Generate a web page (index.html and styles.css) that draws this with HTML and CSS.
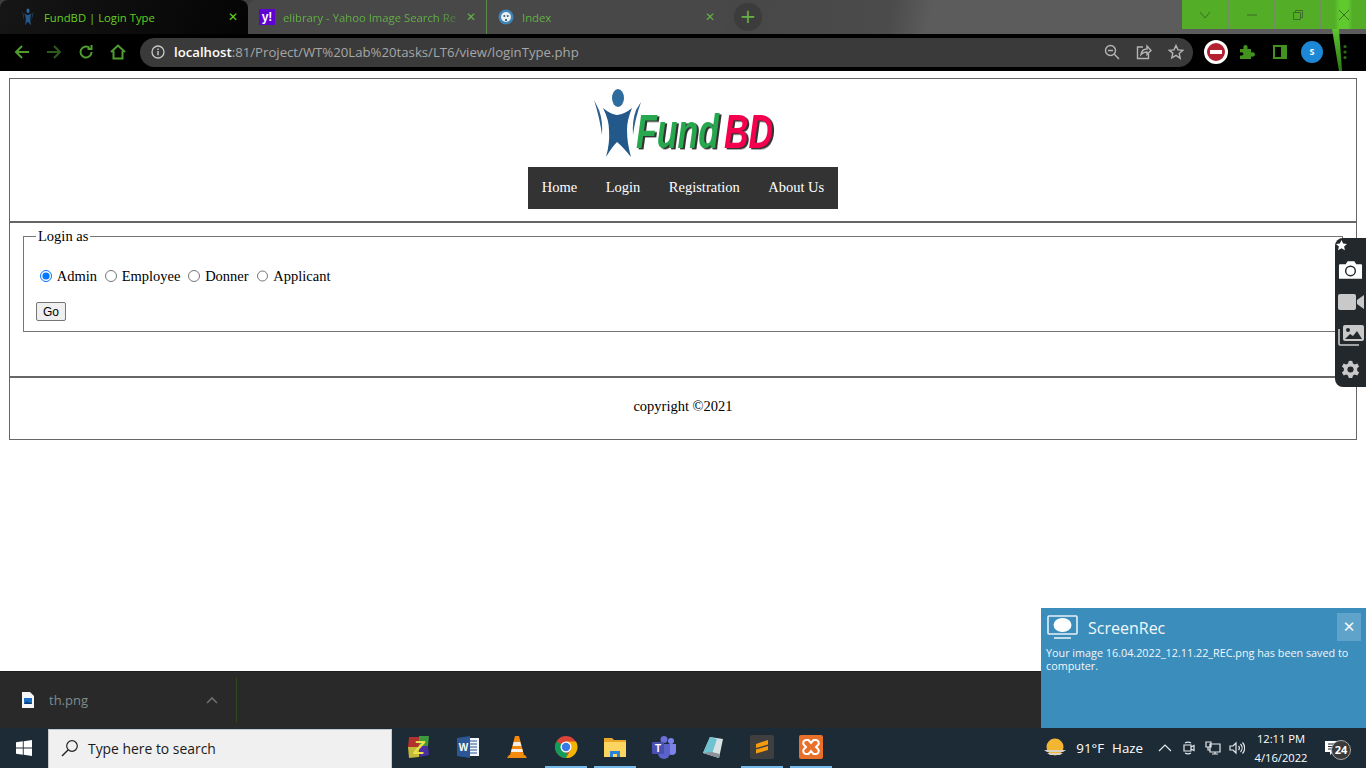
FILE: index.html
```html
<!DOCTYPE html>
<html lang="en">
<head>
    <meta charset="UTF-8">
    <title>FundBD | Login Type</title>
    <link rel="stylesheet" href="styles.css">
</head>
<body>
    <svg class="defs" width="0" height="0">
        <symbol id="figure" viewBox="0 0 50 72">
            <ellipse cx="25" cy="11" rx="6" ry="9" fill="#2f6c9e"/>
            <path d="M10 21 Q17 27 24 28 Q32 27 39 21 Q34 33 34 43 Q34 56 38 70 Q30 60 24 55 Q19 60 13 70 Q17 56 16 43 Q16 33 10 21Z" fill="#23598a"/>
            <path d="M1 13 Q7 32 9 48 Q10 34 6 23Z" fill="#2a5f8e"/>
            <path d="M48 15 Q42 32 40 48 Q39 34 43 23Z" fill="#2a5f8e"/>
        </symbol>
    </svg>

    <header class="browser">
        <div class="tabstrip">
            <div class="tab tab-active">
                <svg class="favicon" width="16" height="18"><use href="#figure"/></svg>
                <span class="tab-title">FundBD | Login Type</span>
                <span class="tab-close">✕</span>
            </div>
            <div class="tab tab-yahoo">
                <span class="favicon-yahoo">y!</span>
                <span class="tab-title tab-fade">elibrary - Yahoo Image Search Re</span>
                <span class="tab-close">✕</span>
            </div>
            <div class="tab tab-index">
                <svg class="favicon" width="16" height="16" viewBox="0 0 16 16">
                    <circle cx="8" cy="8" r="7.5" fill="#3f86b8"/>
                    <circle cx="8" cy="8" r="5" fill="#e9eef2"/>
                    <path d="M5.5 6h1.6v2H5.5zM8.9 6h1.6v2H8.9zM7 10h2v2H7z" fill="#47627a"/>
                </svg>
                <span class="tab-title">Index</span>
                <span class="tab-close">✕</span>
            </div>
            <div class="new-tab">+</div>
            <div class="window-btns">
                <div class="win-btn">
                    <svg width="12" height="12" viewBox="0 0 12 12"><path d="M1 3l5 6 5-6" class="win-line"/></svg>
                </div>
                <div class="win-btn">
                    <svg width="12" height="12" viewBox="0 0 12 12"><path d="M1 6h10" class="win-line"/></svg>
                </div>
                <div class="win-btn">
                    <svg width="12" height="12" viewBox="0 0 12 12"><path d="M1.5 3.5h7v7h-7zM3.5 3.5v-2h7v7h-2" class="win-line"/></svg>
                </div>
                <div class="win-btn win-close">
                    <svg width="12" height="12" viewBox="0 0 12 12"><path d="M1 1l10 10M11 1L1 11" class="win-line"/></svg>
                </div>
            </div>
        </div>
        <div class="toolbar">
            <div class="nav-icons">
                <svg width="16" height="16" viewBox="0 0 16 16"><path d="M15 8H2M8 2L2 8l6 6" class="ico-green"/></svg>
                <svg width="16" height="16" viewBox="0 0 16 16"><path d="M1 8h13M8 2l6 6-6 6" class="ico-dim"/></svg>
                <svg width="16" height="16" viewBox="0 0 16 16"><path d="M13.5 8A5.5 5.5 0 1 1 11.5 3.8M13.5 1v4h-4" class="ico-green"/></svg>
                <svg width="16" height="16" viewBox="0 0 16 16"><path d="M1 8l7-6.5L15 8M3.5 7v7.5h9V7" class="ico-green"/></svg>
            </div>
            <div class="omnibox">
                <svg class="info" width="14" height="14" viewBox="0 0 14 14">
                    <circle cx="7" cy="7" r="6" fill="none" stroke="#c8c8c8" stroke-width="1.3"/>
                    <path d="M7 6v4.2M7 3.6v1.4" stroke="#c8c8c8" stroke-width="1.4"/>
                </svg>
                <span class="url"><b>localhost</b>:81/Project/WT%20Lab%20tasks/LT6/view/loginType.php</span>
                <div class="omni-icons">
                    <svg width="16" height="16" viewBox="0 0 16 16"><circle cx="6.5" cy="6.5" r="5" class="ico-grey"/><path d="M4 6.5h5M10.3 10.3L15 15" class="ico-grey"/></svg>
                    <svg width="16" height="16" viewBox="0 0 16 16"><path d="M7 3H1.5v11.5h11V10M5 10.5C5.5 7 8 5 11 5V2l4 4.5-4 4V8C8.5 8 6.5 8.8 5 10.5Z" class="ico-grey"/></svg>
                    <svg width="16" height="16" viewBox="0 0 16 16"><path d="M8 1.5l2 4.4 4.7.5-3.5 3.2 1 4.7L8 11.4l-4.2 2.4 1-4.7L1.300 6.400 6 5.900z" class="ico-grey"/></svg>
                </div>
            </div>
            <div class="ext-icons">
                <span class="ext-stop"><i></i></span>
                <svg width="16" height="16" viewBox="0 0 16 16"><path d="M1 5h3.500C4 2.500 5 1 6.500 1S9 2.500 8.500 5H12v3.500C14.500 8 16 9 16 10.500S14.500 13 12 12.500V15H1v-3.500C3 12 4.500 11 4.500 10S3 8 1 8.500z" fill="#43911f"/></svg>
                <span class="ext-panel"></span>
                <span class="avatar">S</span>
                <svg width="4" height="16" viewBox="0 0 4 16"><circle cx="2" cy="2.500" r="1.600" fill="#2f6d1c"/><circle cx="2" cy="8" r="1.600" fill="#2f6d1c"/><circle cx="2" cy="13.500" r="1.600" fill="#2f6d1c"/></svg>
            </div>
        </div>
        <div class="glow"></div>
    </header>

    <main class="page">
        <div class="frame">
            <section class="site-head">
                <svg class="logo" width="182" height="73" viewBox="0 0 182 73">
                    <use href="#figure" width="50" height="72"/>
                    <g transform="scale(1 1.4)">
                        <text x="43" y="43.500" class="logo-fund">Fund</text>
                        <text x="131" y="43.500" class="logo-bd">BD</text>
                    </g>
                </svg>
                <nav class="site-nav">
                    <a>Home</a>
                    <a>Login</a>
                    <a>Registration</a>
                    <a>About Us</a>
                </nav>
            </section>
            <section class="site-main">
                <fieldset class="login-box">
                    <legend>Login as</legend>
                    <div class="radios">
                        <label><input type="radio" name="type" checked> Admin</label>
                        <label><input type="radio" name="type"> Employee</label>
                        <label><input type="radio" name="type"> Donner</label>
                        <label><input type="radio" name="type"> Applicant</label>
                    </div>
                    <button class="go">Go</button>
                </fieldset>
            </section>
            <footer class="site-foot">copyright ©2021</footer>
        </div>
    </main>

    <div class="downloads">
        <div class="dl-item">
            <svg width="12" height="16" viewBox="0 0 12 16">
                <path d="M0 0h8l4 4v12H0z" fill="#f4f6f8"/>
                <rect x="2" y="6" width="8" height="6" fill="#1c6fc4"/>
                <path d="M2 12l3-3 2 2 1-1 2 2z" fill="#0d3d75"/>
            </svg>
            <span class="dl-name">th.png</span>
            <svg class="dl-arrow" width="12" height="8" viewBox="0 0 12 8"><path d="M1 7l5-5 5 5" fill="none" stroke="#6e6e6e" stroke-width="1.600"/></svg>
        </div>
    </div>

    <div class="taskbar">
        <div class="start">
            <svg width="16" height="16" viewBox="0 0 16 16"><path d="M0 2.300l6.800-1v6.300H0zM7.700 1.200L16 0v7.600H7.700zM0 8.500h6.800v6.300l-6.800-1zM7.700 8.500H16V16l-8.300-1.200z" fill="#fff"/></svg>
        </div>
        <div class="search">
            <svg width="18" height="18" viewBox="0 0 18 18"><circle cx="11" cy="7" r="5.300" fill="none" stroke="#222" stroke-width="1.200"/><path d="M7 11l-6 6" stroke="#222" stroke-width="1.400"/></svg>
            <span>Type here to search</span>
        </div>
        <div class="apps">
            <div class="app">
                <svg width="24" height="24" viewBox="0 0 24 24">
                    <path d="M2 2h10v10H1z" fill="#b3312d"/><path d="M12 1h10l-1 10h-9z" fill="#3f9a3d"/>
                    <path d="M1 12h11v10L2 23z" fill="#c5b93a"/><path d="M12 11h9l1 9-10 2z" fill="#4b2f9c"/>
                    <text x="12" y="19" class="ico-z">Z</text>
                </svg>
            </div>
            <div class="app">
                <svg width="24" height="24" viewBox="0 0 24 24">
                    <rect x="8" y="3" width="15" height="18" fill="#f2f5f9"/>
                    <path d="M14 6h7M14 9h7M14 12h7M14 15h7M14 18h7" stroke="#2b5797" stroke-width="1"/>
                    <path d="M1 3l13-2v22L1 21z" fill="#2b5797"/>
                    <text x="7.500" y="16" class="ico-w">W</text>
                </svg>
            </div>
            <div class="app">
                <svg width="24" height="24" viewBox="0 0 24 24">
                    <path d="M2 23l2-3h16l2 3z" fill="#f08a0c"/>
                    <path d="M10 1h4l5 19H5z" fill="#f58a0e"/>
                    <path d="M8.700 7h6.600l1 4H7.700zM6.800 14h10.400l.8 3H6z" fill="#f4f1ea"/>
                </svg>
            </div>
            <div class="app">
                <svg width="24" height="24" viewBox="0 0 24 24">
                    <circle cx="12" cy="12" r="11" fill="#db4437"/>
                    <path d="M12 12L2.500 17.500A11 11 0 0 0 12 23h1z" fill="#0f9d58"/>
                    <path d="M2.500 17.500A11 11 0 0 1 2.500 6.500L12 12z" fill="#0f9d58"/>
                    <path d="M12 6.500h10A11 11 0 0 1 12 23l5-9z" fill="#f4b400"/>
                    <circle cx="12" cy="12" r="5.500" fill="#fff"/>
                    <circle cx="12" cy="12" r="4.200" fill="#3b78e7"/>
                </svg>
            </div>
            <div class="app">
                <svg width="24" height="24" viewBox="0 0 24 24">
                    <path d="M1 3h8l2 2h12v5H1z" fill="#e8a92c"/>
                    <rect x="1" y="7" width="22" height="15" fill="#fbd560"/>
                    <path d="M7 22v-6h10v6h-3v-3h-4v3z" fill="#2a83d6"/>
                </svg>
            </div>
            <div class="app">
                <svg width="26" height="24" viewBox="0 0 26 24">
                    <circle cx="20" cy="6" r="3" fill="#7b83eb"/>
                    <circle cx="13" cy="4.500" r="3.500" fill="#6a70d8"/>
                    <path d="M17 9h8v7a4 4 0 0 1-8 0z" fill="#7b83eb"/>
                    <path d="M7 9h12v9a6 6 0 0 1-12 0z" fill="#5b63cb"/>
                    <rect x="1" y="7" width="12" height="12" rx="1" fill="#4a50b0"/>
                    <text x="7" y="16.500" class="ico-t">T</text>
                </svg>
            </div>
            <div class="app">
                <svg width="24" height="24" viewBox="0 0 24 24">
                    <path d="M9 2l13 2-4 19L2 18z" fill="#d9e3e6"/>
                    <path d="M9 2l-7 16 9 1 5-15z" fill="#6fc3d0"/>
                    <path d="M2 18l16 5 .8-4L11 17z" fill="#8c9398"/>
                </svg>
            </div>
            <div class="app">
                <svg width="24" height="24" viewBox="0 0 24 24">
                    <rect width="24" height="24" rx="2" fill="#3f3f3f"/>
                    <path d="M18 5L6 9v4l12 -3.500zM18 11L6 14.500v4L18 15z" fill="#f79a0e"/>
                </svg>
            </div>
            <div class="app">
                <svg width="24" height="24" viewBox="0 0 24 24">
                    <rect width="24" height="24" rx="2" fill="#e9702a"/>
                    <path d="M7 5h2.500l2.500 3 2.500-3H17a3 3 0 0 1 2 5l-2 2 2 2a3 3 0 0 1-2 5h-2.500L12 16l-2.500 3H7a3 3 0 0 1-2-5l2-2-2-2a3 3 0 0 1 2-5z" fill="none" stroke="#fff" stroke-width="2"/>
                </svg>
            </div>
        </div>
        <div class="tray">
            <svg class="weather" width="24" height="20" viewBox="0 0 24 20">
                <circle cx="12" cy="9" r="8.500" fill="#f2b632"/>
                <path d="M1 12h22l-3 2H4zM4 15h16l-3 2H7z" fill="#d8d2c4"/>
            </svg>
            <span class="temp">91°F</span>
            <span class="haze">Haze</span>
            <svg class="tray-chev" width="14" height="8" viewBox="0 0 14 8"><path d="M1 7l6-6 6 6" class="tray-line"/></svg>
            <svg class="tray-meet" width="14" height="16" viewBox="0 0 14 16"><path d="M3 3a6 6 0 0 1 6 0M3 13a6 6 0 0 0 6 0M2 5h7v6H2zM9 7l3-1.500v5L9 9" class="tray-line"/></svg>
            <svg class="tray-net" width="16" height="14" viewBox="0 0 16 14"><path d="M5 3h10v8H5zM1 1h5v5H1zM10 11v2M7 13h6M3 6v3h2" class="tray-line"/></svg>
            <svg class="tray-vol" width="16" height="14" viewBox="0 0 16 14"><path d="M1 5h3l3-3v10L4 9H1zM9.500 5a3 3 0 0 1 0 4M11.500 3a6 6 0 0 1 0 8M13.500 1.500a8 8 0 0 1 0 11" class="tray-line"/></svg>
            <div class="clock"><span>12:11 PM</span><span>4/16/2022</span></div>
            <div class="notif">
                <svg width="16" height="14" viewBox="0 0 16 14"><path d="M0 0h16v11H8l-3 3v-3H0z" fill="#fff"/><path d="M3 3h10M3 5.500h10M3 8h7" stroke="#1d2b36" stroke-width="1"/></svg>
                <span class="badge">24</span>
            </div>
        </div>
    </div>

    <aside class="capture-bar">
        <svg class="cap-pin" width="11" height="11" viewBox="0 0 11 11"><path d="M5.500 0l1.600 3.500 3.900.4-2.900 2.500.8 3.800-3.400-2-3.400 2 .8-3.800L0 3.900l3.900-.4z" fill="#fff"/></svg>
        <svg width="25" height="20" viewBox="0 0 26 20"><path d="M2 4h6l2-3h7l2 3h5a1 1 0 0 1 1 1v14H1V5a1 1 0 0 1 1-1z" fill="#fff"/><circle cx="13" cy="11" r="5" fill="none" stroke="#23282d" stroke-width="1.500"/></svg>
        <svg width="26" height="18" viewBox="0 0 26 18"><rect y="1" width="18" height="16" rx="2" fill="#c9c9c9"/><path d="M19 7l7-5v14l-7-5z" fill="#c9c9c9"/></svg>
        <svg width="26" height="22" viewBox="0 0 26 22"><path d="M1 5v15a1 1 0 0 0 1 1h19" fill="none" stroke="#c9c9c9" stroke-width="1.600"/><rect x="5" y="1" width="21" height="16" rx="2" fill="#c9c9c9"/><circle cx="10" cy="6" r="2" fill="#23282d"/><path d="M7 15l5-5 3 2 4-5 5 8z" fill="#23282d"/></svg>
        <svg width="21" height="21" viewBox="0 0 24 24"><path d="M12 2l2 .2.800 3 2 1 3-1 2 3.300-2.200 2.200v2.600l2.200 2.200-2 3.300-3-1-2 1-.8 3h-4l-.8-3-2-1-3 1-2-3.300 2.200-2.200v-2.600L2.200 8.500l2-3.300 3 1 2-1 .8-3z" fill="#c9c9c9"/><circle cx="12" cy="12" r="3.500" fill="#23282d"/></svg>
    </aside>

    <aside class="toast">
        <div class="toast-head">
            <svg width="31" height="24" viewBox="0 0 31 24">
                <rect x="1" y="1" width="29" height="18" rx="1" fill="none" stroke="#e6f0f6" stroke-width="1.600"/>
                <ellipse cx="15.500" cy="10" rx="9" ry="7" fill="#fff"/>
                <path d="M7 23h17" stroke="#e6f0f6" stroke-width="1.600"/>
            </svg>
            <span class="toast-title">ScreenRec</span>
            <span class="toast-close">✕</span>
        </div>
        <p class="toast-text">Your image 16.04.2022_12.11.22_REC.png has been saved to computer.</p>
    </aside>
</body>
</html>
```

FILE: styles.css
```css
* {
    box-sizing: border-box;
}
html, body {
    margin: 0;
    height: 768px;
    overflow: hidden;
}
body {
    position: relative;
    display: flex;
    flex-direction: column;
    background: #fff;
    font-family: "Liberation Serif", serif;
    font-size: 14.5px;
    color: #000;
}
.defs {
    position: absolute;
}

/* browser top */
.browser {
    position: relative;
    flex: none;
    height: 71px;
    background: #000;
    font-family: "Open Sans", sans-serif;
}
.tabstrip {
    display: flex;
    align-items: stretch;
    height: 34px;
    background: linear-gradient(100deg, #3d3d3d 0%, #464646 50%, #4b4b4b 65%, #5c5c5c 68%, #5c5c5c 100%);
}
.tab {
    display: flex;
    align-items: center;
    color: #62b045;
    font-size: 11.300px;
}
.tab-active {
    width: 248px;
    padding: 0 10px 0 20px;
    background: linear-gradient(110deg, #161616 0%, #0b0b0b 60%, #040404 100%);
    border-radius: 8px 8px 0 0;
    color: #62d01f;
}
.tab-yahoo {
    width: 239px;
    padding: 0 10px 0 11px;
    background: #484848;
    border-right: 1px solid #5a8a48;
    border-radius: 8px 0 0 0;
}
.tab-index {
    width: 240px;
    padding: 0 12px 0 11px;
    background: #484848;
    border-radius: 0 0 8px 0;
}
.favicon {
    flex: none;
    margin-right: 8px;
}
.favicon-yahoo {
    flex: none;
    width: 16px;
    height: 16px;
    margin-right: 8px;
    background: #5f01d1;
    color: #fff;
    font: bold 12px/16px "Liberation Sans", sans-serif;
    text-align: center;
}
.tab-title {
    flex: 1;
    white-space: nowrap;
    overflow: hidden;
}
.tab-fade {
    -webkit-mask-image: linear-gradient(to right, #000 85%, transparent 100%);
    mask-image: linear-gradient(to right, #000 85%, transparent 100%);
}
.tab-close {
    flex: none;
    font-size: 12px;
    font-family: "DejaVu Sans", sans-serif;
}
.new-tab {
    flex: none;
    width: 28px;
    height: 28px;
    margin: 3px 0 0 7px;
    border-radius: 50%;
    background: #3c3c3c;
    color: #62b045;
    font: 20px/27px "DejaVu Sans", sans-serif;
    text-align: center;
}
.window-btns {
    display: flex;
    height: 29px;
    margin-left: auto;
}
.win-btn {
    width: 46px;
    display: flex;
    align-items: center;
    justify-content: center;
    background: #53ad27;
    border-left: 1px solid #6f8f60;
}
.win-btn:first-child {
    border-left: none;
}
.win-close {
    background: linear-gradient(90deg, #53ad27 30%, #5fc92e 40%, #5fc92e 60%, #53ad27 70%);
}
.win-line {
    fill: none;
    stroke: #3b6f26;
    stroke-width: 1;
}
.toolbar {
    display: flex;
    align-items: center;
    height: 36px;
    padding: 0 0 0 14px;
}
.nav-icons {
    display: flex;
    gap: 16px;
    width: 126px;
    flex: none;
}
.ico-green, .ico-dim {
    fill: none;
    stroke: #4f9d2f;
    stroke-width: 2;
}
.ico-dim {
    stroke: #2d5a1d;
}
.omnibox {
    display: flex;
    align-items: center;
    width: 1053px;
    height: 29px;
    padding: 0 9px 0 11px;
    background: #3a3a3a;
    border-radius: 15px;
}
.info {
    flex: none;
    margin-right: 9px;
}
.url {
    flex: 1;
    color: #a6a6a6;
    font-size: 13.200px;
    white-space: nowrap;
}
.url b {
    color: #fff;
    font-weight: 600;
}
.omni-icons {
    display: flex;
    gap: 16px;
}
.ico-grey {
    fill: none;
    stroke: #b5b5b5;
    stroke-width: 1.4;
}
.ext-icons {
    display: flex;
    align-items: center;
    margin-left: 11px;
}
.ext-stop {
    display: flex;
    align-items: center;
    justify-content: center;
    width: 24px;
    height: 24px;
    border-radius: 50%;
    background: #b3202f;
    border: 3px solid #fff;
    margin-right: 11px;
}
.ext-stop i {
    width: 12px;
    height: 4px;
    background: #fff;
}
.ext-panel {
    width: 14px;
    height: 14px;
    margin: 0 14px 0 18px;
    border: 2px solid #43911f;
    border-right-width: 6px;
}
.avatar {
    width: 22px;
    height: 22px;
    margin-right: 20px;
    border-radius: 50%;
    background: #1c87d4;
    color: #fff;
    font: bold 9px/22px "Open Sans", sans-serif;
    text-align: center;
}
.glow {
    position: absolute;
    left: 1332px;
    top: 29px;
    width: 10px;
    height: 42px;
    background: linear-gradient(to bottom, #5cc52e, #2c7a18);
    clip-path: polygon(0 0, 70% 0, 100% 100%, 70% 100%);
    filter: blur(.6px);
}

/* the page itself */
.page {
    flex: 1;
    padding: 7px 9px 0;
    background: #fff;
}
.frame {
    height: 362px;
    border: 1px solid #666;
}
.site-head {
    display: flex;
    flex-direction: column;
    align-items: center;
    height: 144px;
    padding-top: 8px;
    border-bottom: 2px solid #666;
}
.logo {
    display: block;
    flex: none;
    margin-left: 2px;
}
.logo-fund, .logo-bd {
    font: italic bold 34px "Liberation Sans", sans-serif;
    filter: drop-shadow(2px 1px 0 #333);
}
.logo-fund {
    fill: #27a84f;
}
.logo-bd {
    fill: #f5004e;
}
.site-nav {
    display: flex;
    margin-top: 7px;
    background: #333;
}
.site-nav a {
    padding: 0 14.250px 2px;
    color: #fff;
    line-height: 40px;
}
.site-main {
    height: 155px;
    padding: 5px 13px 0;
    border-bottom: 2px solid #666;
}
.login-box {
    margin: 0;
    width: 1320px;
    height: 104px;
    padding: 19px 12px 0;
    border: 1px solid #767676;
}
.login-box legend {
    padding: 0 2px;
    margin-left: 0;
}
.radios {
    display: flex;
    align-items: center;
    height: 24px;
    gap: 8px;
}
.radios label {
    display: flex;
    align-items: center;
    gap: 5px;
}
.radios input {
    width: 11.700px;
    height: 11.700px;
    margin: 0 0 0 4px;
}
.radios label + label input {
    margin-left: 0;
}
.go {
    display: block;
    width: 30px;
    height: 19px;
    margin-top: 14px;
    padding: 0;
    background: #efefef;
    border: 1px solid #767676;
    border-radius: 2px;
    font: 12px "Liberation Sans", sans-serif;
    color: #000;
}
.site-foot {
    padding-top: 20px;
    text-align: center;
    line-height: 17px;
}

/* download shelf */
.downloads {
    flex: none;
    height: 57px;
    background: #292929;
    border-top: 1px solid #1d1d1d;
    font-family: "Open Sans", sans-serif;
}
.dl-item {
    display: flex;
    align-items: center;
    width: 237px;
    height: 44px;
    margin-top: 6px;
    padding: 0 18px 0 22px;
    border-right: 1px solid #2f4a22;
}
.dl-name {
    flex: 1;
    margin-left: 15px;
    color: #7f8c8c;
    font-size: 13px;
}

/* windows taskbar */
.taskbar {
    flex: none;
    display: flex;
    align-items: stretch;
    height: 40px;
    background: #1c2b36;
    color: #fff;
    font-family: "Open Sans", sans-serif;
}
.start {
    display: flex;
    align-items: center;
    justify-content: center;
    width: 48px;
}
.search {
    display: flex;
    align-items: center;
    gap: 9px;
    width: 344px;
    margin-top: 1px;
    padding: 0 0 2px 12px;
    background: #f0f0f0;
    border: 1px solid #c8c8c8;
    border-bottom: none;
    color: #1a1a1a;
    font-size: 13.900px;
}
.apps {
    display: flex;
    margin-left: 2px;
}
.app {
    display: flex;
    align-items: center;
    justify-content: center;
    width: 49px;
    border-bottom: 2px solid transparent;
}
.app:nth-child(4), .app:nth-child(5), .app:nth-child(8), .app:nth-child(9) {
    border-image: linear-gradient(to right, transparent 5px, #76b9ed 5px, #76b9ed 45px, transparent 45px) 1;
}
.ico-z {
    font: italic bold 18px "Liberation Sans", sans-serif;
    fill: #e9e24a;
    text-anchor: middle;
}
.ico-w, .ico-t {
    font: bold 10px "Liberation Sans", sans-serif;
    fill: #fff;
    text-anchor: middle;
}
.tray {
    display: flex;
    align-items: center;
    margin-left: auto;
    padding-right: 11px;
    font-size: 13.300px;
}
.temp {
    margin-left: 9px;
}
.haze {
    margin-left: 8px;
}
.tray-chev {
    margin-left: 15px;
}
.tray-meet {
    margin-left: 10px;
}
.tray-net {
    margin-left: 9px;
}
.tray-vol {
    margin-left: 8px;
}
.tray-line {
    fill: none;
    stroke: #e4e8ea;
    stroke-width: 1.200;
}
.clock {
    display: flex;
    flex-direction: column;
    align-items: center;
    width: 62px;
    margin: 0 1px 0 5px;
    font-size: 11.200px;
    line-height: 19px;
}
.notif {
    position: relative;
    display: flex;
    align-items: center;
    width: 42px;
    height: 100%;
    padding-left: 12px;
}
.badge {
    position: absolute;
    left: 18px;
    top: 12px;
    width: 20px;
    height: 20px;
    border: 1px solid #a8a8a8;
    border-radius: 50%;
    background: #3a3a3a;
    font: bold 11px/18px "Open Sans", sans-serif;
    text-align: center;
}

/* overlays */
.capture-bar {
    position: absolute;
    right: 0;
    top: 238px;
    display: flex;
    flex-direction: column;
    align-items: center;
    gap: 13px;
    width: 31px;
    height: 149px;
    padding-top: 22px;
    background: #23282d;
    border-radius: 8px 0 0 8px;
}
.cap-pin {
    position: absolute;
    left: 1px;
    top: 2px;
}
.toast {
    position: absolute;
    left: 1041px;
    top: 608px;
    width: 325px;
    height: 120px;
    padding: 5px 5px 0 5px;
    background: #3b8dbc;
    color: #f2f7fa;
    font-family: "Open Sans", sans-serif;
}
.toast-head {
    display: flex;
    align-items: center;
    height: 28px;
    padding-left: 1px;
}
.toast-title {
    flex: 1;
    margin-left: 10px;
    padding-top: 2px;
    font-size: 16px;
}
.toast-close {
    width: 24px;
    height: 28px;
    background: #5fa3cb;
    font: 15px/28px "DejaVu Sans", sans-serif;
    text-align: center;
}
.toast-text {
    margin: 5px 0 0;
    font-size: 10.800px;
    line-height: 13px;
}
```
